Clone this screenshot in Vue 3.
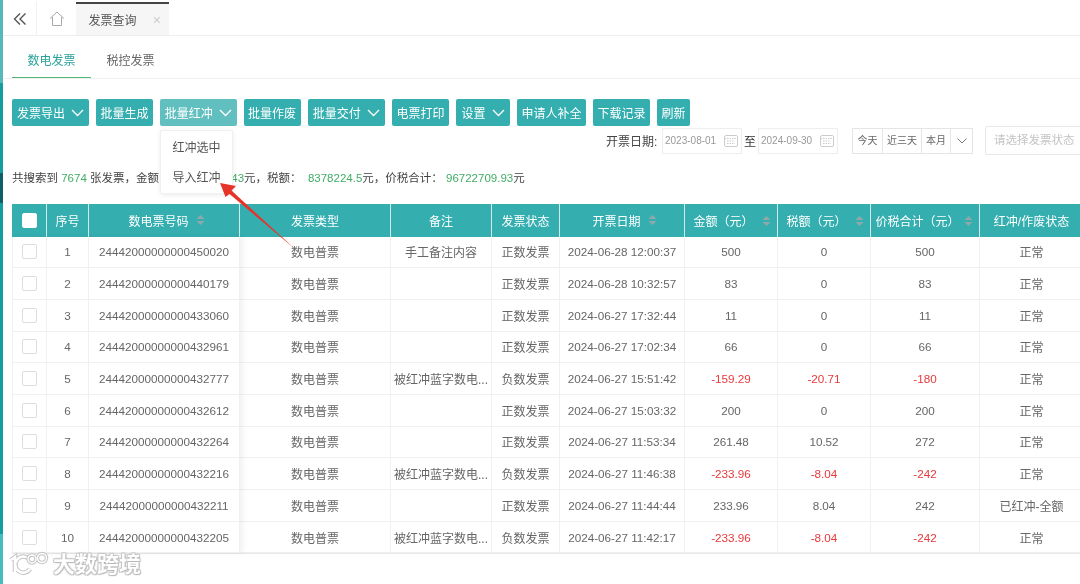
<script setup>
const columns = [
  { title: '序号' },
  { title: '数电票号码', sort: true },
  { title: '发票类型' },
  { title: '备注' },
  { title: '发票状态' },
  { title: '开票日期', sort: true },
  { title: '金额\uFF08元\uFF09', sort: true, edge: true },
  { title: '税额\uFF08元\uFF09', sort: true, edge: true },
  { title: '价税合计\uFF08元\uFF09', sort: true, edge: true },
  { title: '红冲/作废状态' }
]
const mark = '被红冲蓝字数电...'
const rows = [
  [1, '24442000000000450020', '手工备注内容', '正数发票', '2024-06-28 12:00:37', '500', '0', '500', '正常'],
  [2, '24442000000000440179', '', '正数发票', '2024-06-28 10:32:57', '83', '0', '83', '正常'],
  [3, '24442000000000433060', '', '正数发票', '2024-06-27 17:32:44', '11', '0', '11', '正常'],
  [4, '24442000000000432961', '', '正数发票', '2024-06-27 17:02:34', '66', '0', '66', '正常'],
  [5, '24442000000000432777', mark, '负数发票', '2024-06-27 15:51:42', '-159.29', '-20.71', '-180', '正常'],
  [6, '24442000000000432612', '', '正数发票', '2024-06-27 15:03:32', '200', '0', '200', '正常'],
  [7, '24442000000000432264', '', '正数发票', '2024-06-27 11:53:34', '261.48', '10.52', '272', '正常'],
  [8, '24442000000000432216', mark, '负数发票', '2024-06-27 11:46:38', '-233.96', '-8.04', '-242', '正常'],
  [9, '24442000000000432211', '', '正数发票', '2024-06-27 11:44:44', '233.96', '8.04', '242', '已红冲-全额'],
  [10, '24442000000000432205', mark, '负数发票', '2024-06-27 11:42:17', '-233.96', '-8.04', '-242', '正常']
]
const buttons = [
  { text: '发票导出', arrow: true, w: 77 },
  { text: '批量生成', w: 57 },
  { text: '批量红冲', arrow: true, active: true, w: 76.5 },
  { text: '批量作废', w: 57 },
  { text: '批量交付', arrow: true, w: 77.5 },
  { text: '电票打印', w: 57 },
  { text: '设置', arrow: true, w: 54 },
  { text: '申请人补全', w: 69 },
  { text: '下载记录', w: 57 },
  { text: '刷新', w: 33 }
]
const isNeg = (v) => String(v).startsWith('-')
</script>

<template>
  <div class="page">
    <div class="strip"></div>
    <div class="main">
      <header class="topbar">
        <div class="tool">
          <svg width="14" height="14" viewBox="0 0 14 14" fill="none" stroke="#555" stroke-width="1.4"><path d="M7 1.500 1.500 7 7 12.500M12.500 1.500 7 7l5.500 5.500"/></svg>
        </div>
        <div class="tool home">
          <svg width="16" height="15" viewBox="0 0 16 15" fill="none" stroke="#aaa" stroke-width="1"><path d="M1 7.500 8 1l7 6.500M3.500 6v8.500h9V6"/></svg>
        </div>
        <div class="page-tab"><span>发票查询</span><i>×</i></div>
      </header>

      <nav class="subtabs">
        <div class="subtab on">数电发票</div>
        <div class="subtab">税控发票</div>
      </nav>

      <div class="btns">
        <button v-for="b in buttons" :key="b.text" class="btn" :class="{ active: b.active }" :style="{ width: b.w + 'px' }">
          {{ b.text }}
          <svg v-if="b.arrow" width="13" height="8" viewBox="0 0 13 8" fill="none" stroke="#fff" stroke-width="1.3"><path d="M1 1l5.500 5.500L12 1"/></svg>
        </button>
      </div>

      <div class="filters">
        <span class="label">开票日期:</span>
        <div class="date"><span>2023-08-01</span>
          <svg width="14" height="13" viewBox="0 0 14 13" fill="none" stroke="#ccc"><rect x=".5" y="1.500" width="13" height="11" rx="1.500"/><path d="M.5 4.500h13M3 7h8M3 9.500h8" stroke-dasharray="1.500 1"/></svg>
        </div>
        <span class="to">至</span>
        <div class="date"><span>2024-09-30</span>
          <svg width="14" height="13" viewBox="0 0 14 13" fill="none" stroke="#ccc"><rect x=".5" y="1.500" width="13" height="11" rx="1.500"/><path d="M.5 4.500h13M3 7h8M3 9.500h8" stroke-dasharray="1.500 1"/></svg>
        </div>
        <div class="quick">
          <span class="q1">今天</span><span class="q2">近三天</span><span class="q3">本月</span>
          <span class="q4"><svg width="10" height="6" viewBox="0 0 10 6" fill="none" stroke="#777"><path d="M.5.500 5 5 9.500.500"/></svg></span>
        </div>
        <div class="state">请选择发票状态</div>
      </div>

      <p class="summary">
        共搜索到 <b>7674</b> 张发票&#65292;金额&#65306;&nbsp; <b>88344485.43</b>元&#65292;税额&#65306;&nbsp; <b>8378224.5</b>元&#65292;价税合计&#65306; <b>96722709.93</b>元
      </p>

      <div class="table">
        <div class="row head">
          <div class="cell"><span class="check white"></span></div>
          <div v-for="c in columns" :key="c.title" class="cell" :class="{ edge: c.edge, sorted: c.sort && !c.edge }">
            <span>{{ c.title }}</span>
            <svg v-if="c.sort" class="sort" width="9" height="12" viewBox="0 0 9 12" fill="#8fa9aa"><path d="M4.500 1 8.500 5H.5zM4.500 11 .5 7h8z"/></svg>
          </div>
        </div>
        <div v-for="r in rows" :key="r[0]" class="row">
          <div class="cell"><span class="check"></span></div>
          <div class="cell num">{{ r[0] }}</div>
          <div class="cell num">{{ r[1] }}</div>
          <div class="cell">数电普票</div>
          <div class="cell">{{ r[2] }}</div>
          <div class="cell">{{ r[3] }}</div>
          <div class="cell num">{{ r[4] }}</div>
          <div class="cell num" :class="{ neg: isNeg(r[5]) }">{{ r[5] }}</div>
          <div class="cell num" :class="{ neg: isNeg(r[6]) }">{{ r[6] }}</div>
          <div class="cell num" :class="{ neg: isNeg(r[7]) }">{{ r[7] }}</div>
          <div class="cell">{{ r[8] }}</div>
        </div>
        <div class="fixed-shadow"></div>
      </div>
    </div>

    <div class="menu">
      <div>红冲选中</div>
      <div>导入红冲</div>
    </div>

    <svg class="pointer" width="90" height="80" viewBox="0 0 90 80">
      <path d="M0 0 16 3 11.500 7.500 75 66 9.500 11 5.500 14z" fill="#e5352b"/>
    </svg>

    <div class="wm">
      <svg width="44" height="30" viewBox="0 0 44 30" fill="none" stroke="#fff" stroke-width="2.500">
        <path d="M3 13 7 10v15" stroke="#c4c4c4" stroke-width="4.500"/>
        <path d="M21 12a8 8 0 1 0 1 10" stroke="#c4c4c4" stroke-width="4.500"/>
        <path d="M3 13 7 10v15M21 12a8 8 0 1 0 1 10"/>
        <circle cx="24" cy="12" r="4" stroke="#c4c4c4" stroke-width="3.500"/>
        <circle cx="34" cy="11" r="4.500" stroke="#c4c4c4" stroke-width="3.500"/>
        <circle cx="24" cy="12" r="4" stroke-width="1.500"/>
        <circle cx="34" cy="11" r="4.500" stroke-width="1.500"/>
      </svg>
      <span>大数跨境</span>
    </div>
  </div>
</template>

<style>
html, body { margin: 0; background: #fff; }
</style>

<style scoped>
.page {
  position: relative;
  display: flex;
  width: 1080px;
  height: 584px;
  overflow: hidden;
  background: #fff;
  font-family: "Liberation Sans", "Noto Sans CJK SC", sans-serif;
  font-size: 12px;
  color: #666;
  filter: blur(0.35px);
}
.strip {
  flex: none;
  width: 3px;
  background: linear-gradient(#55b9ba 83px, #159e9f 83px, #159e9f 173px, #0e5f66 173px, #0e5f66 203px, #159e9f 203px, #159e9f 534px, #45bcbd 534px);
}
.main { flex: none; width: 1077px; min-width: 0; }
.topbar {
  display: flex;
  box-sizing: border-box;
  height: 34px;
  margin-top: 2px;
  border-bottom: 1px solid #eee;
}
.tool {
  display: flex;
  align-items: center;
  justify-content: center;
  width: 33px;
  border-right: 1px solid #f0f0f0;
}
.tool.home { width: 39px; border-right: 0; }
.page-tab {
  display: flex;
  align-items: center;
  justify-content: space-between;
  box-sizing: border-box;
  width: 93px;
  padding: 0 8px 0 12.500px;
  background: #f6f6f6;
  border-top: 2px solid #444;
  color: #555;
}
.page-tab i { font-style: normal; font-size: 14px; color: #ccc; }
.subtabs {
  display: flex;
  box-sizing: border-box;
  height: 43px;
  padding-left: 9px;
  border-bottom: 1px solid #f0f0f0;
}
.subtab {
  box-sizing: border-box;
  width: 79px;
  height: 42px;
  line-height: 50px;
  text-align: center;
  color: #666;
}
.subtab.on { color: #2aa29b; border-bottom: 1px solid #4fb877; }
.btns {
  display: flex;
  gap: 7px;
  margin-top: 20px;
  padding-left: 9px;
}
.btn {
  display: flex;
  align-items: center;
  justify-content: center;
  flex: none;
  gap: 6px;
  height: 27px;
  padding: 0;
  border: 0;
  border-radius: 2px;
  background: #35aeb0;
  color: #fff;
  font: inherit;
}
.btn.active { background: #62bfc0; }
.filters {
  display: flex;
  align-items: center;
  height: 29px;
  padding-left: 603px;
}
.filters > * { flex: none; }
.label { width: 56px; color: #444; white-space: nowrap; }
.date {
  display: flex;
  align-items: center;
  justify-content: space-between;
  box-sizing: border-box;
  width: 80px;
  height: 26px;
  padding: 0 3px 0 2px;
  border: 1px solid #eee;
  color: #999;
  font-size: 10px;
  white-space: nowrap;
}
.to { width: 16px; text-align: center; color: #333; }
.quick {
  display: flex;
  box-sizing: border-box;
  height: 26px;
  margin-left: 14px;
  border: 1px solid #e5e5e5;
  line-height: 24px;
  text-align: center;
  font-size: 10px;
  color: #666;
}
.quick span { display: block; box-sizing: border-box; border-right: 1px solid #e5e5e5; }
.q1 { width: 30px; }
.q2 { width: 39px; }
.q3 { width: 29px; }
.quick .q4 { display: flex; align-items: center; justify-content: center; width: 21px; border-right: 0; }
.state {
  box-sizing: border-box;
  width: 110px;
  height: 29px;
  margin-left: 12px;
  padding-left: 8px;
  line-height: 27px;
  border: 1px solid #e8e8e8;
  border-radius: 2px;
  font-size: 11.500px;
  color: #c4c4c4;
}
.summary {
  margin: 16px 0 0 9px;
  height: 14px;
  line-height: 14px;
  font-size: 11.500px;
  color: #444;
  white-space: nowrap;
}
.summary b { font-weight: 400; color: #41ad66; }
.table {
  position: relative;
  width: 1072px;
  margin: 19px 0 0 9px;
  border-bottom: 1px solid #e8e8e8;
}
.row {
  display: grid;
  grid-template-columns: 35px 42px 151px 151px 101px 68px 125px 93px 93px 109px 104px;
  height: 31.700px;
  border-bottom: 1px solid #f0f0f0;
  box-sizing: border-box;
}
.row:last-of-type { border-bottom: 0; }
.row.head {
  height: 32.500px;
  background: #35aeb0;
  color: #fff;
  border-bottom: 0;
}
.cell {
  display: flex;
  align-items: center;
  justify-content: center;
  min-width: 0;
  border-right: 1px solid #f0f0f0;
  white-space: nowrap;
}
.num { font-size: 11.700px; }
.row:not(.head) .cell:first-child { border-left: 1px solid #f0f0f0; }
.head .cell { position: relative; gap: 7px; border-right: 1px solid #cfeaea; }
.head .cell.sorted { padding-left: 5px; }
.head .cell.edge { padding-right: 15px; }
.head .edge .sort { position: absolute; right: 6px; top: 10.500px; }
.neg { color: #e8393b; }
.check {
  display: block;
  box-sizing: border-box;
  width: 15px;
  height: 15px;
  border: 1px solid #ddd;
  border-radius: 2px;
  background: #fff;
}
.check.white { border-color: #fff; }
.fixed-shadow {
  position: absolute;
  left: 0;
  top: 33px;
  bottom: 0;
  width: 228px;
  box-shadow: 3px 0 6px rgba(0, 0, 0, 0.06);
  pointer-events: none;
}
.menu {
  position: absolute;
  left: 160px;
  top: 130px;
  width: 73px;
  height: 64px;
  box-sizing: border-box;
  padding-top: 2px;
  background: #fff;
  border: 1px solid #f0f0f0;
  border-radius: 2px;
  box-shadow: 0 1px 5px rgba(0, 0, 0, 0.08);
  text-align: center;
  color: #555;
}
.menu div { height: 30px; line-height: 30px; }
.pointer { position: absolute; left: 220px; top: 183px; }
.wm {
  position: absolute;
  left: 8px;
  top: 546px;
  display: flex;
  align-items: center;
  gap: 1px;
}
.wm span {
  font-size: 22px;
  font-weight: 700;
  color: #fff;
  text-shadow: 0 0 1px #aaa, 1px 1px 1px #bbb, -1px -1px 1px #ccc, 1px -1px 1px #ccc, -1px 1px 1px #ccc;
}
</style>
